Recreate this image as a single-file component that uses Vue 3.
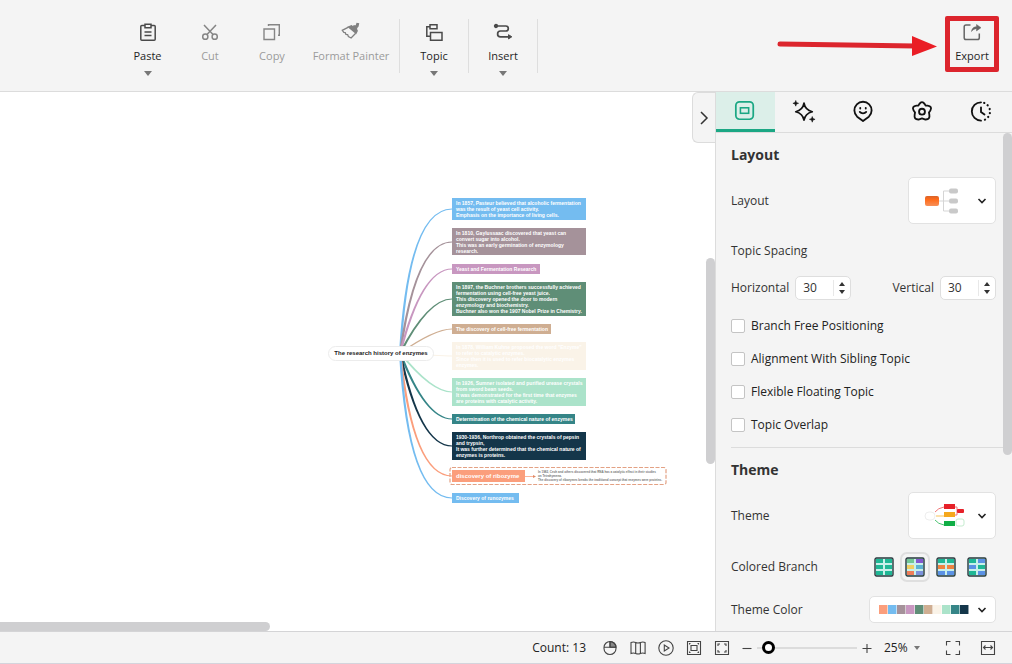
<script setup>
import { ref } from 'vue'

const horizontal = ref(30)
const vertical = ref(30)
const zoom = ref(6)
const scale = ref('25%')
const activeTab = ref(0)
const activeBranch = ref(1)

const options = ref([
  { label: 'Branch Free Positioning', on: false },
  { label: 'Alignment With Sibling Topic', on: false },
  { label: 'Flexible Floating Topic', on: false },
  { label: 'Topic Overlap', on: false },
])

const tabs = ['Style', 'AI', 'Mark', 'Clipart', 'History']

const palette = ['#fb9e7c', '#74bcf0', '#a5929a', '#c897c0', '#5f8e77', '#cfae92', '#faf3e8', '#abe3ca', '#358587', '#14364a']

const g = '#1fb795'
const o = '#ee8340'
const b = '#5b92e5'
const branches = [
  { name: 'Single color', cells: [g, g, g, g, g, g] },
  { name: 'Rainbow', cells: ['#72c795', '#8257cf', '#f0cf62', '#5eb2d3', '#ef7d58', '#7b91dc'] },
  { name: 'Alternating rows', cells: [g, g, o, o, b, b] },
  { name: 'Alternating cells', cells: [g, b, b, g, g, b] },
]

const rootX = 400
const rootY = 261
const topics = [
  { y: 106, w: 134, c: '#74bcf0', lines: ['In 1857, Pasteur believed that alcoholic fermentation', 'was the result of yeast cell activity.', 'Emphasis on the importance of living cells.'] },
  { y: 136, w: 134, c: '#a5929a', lines: ['In 1810, Gaylussaac discovered that yeast can', 'convert sugar into alcohol.', 'This was an early germination of enzymology', 'research.'] },
  { y: 172, w: 88, c: '#c897c0', lines: ['Yeast and Fermentation Research'] },
  { y: 190, w: 134, c: '#5f8e77', lines: ['In 1897, the Buchner brothers successfully achieved', 'fermentation using cell-free yeast juice.', 'This discovery opened the door to modern', 'enzymology and biochemistry.', 'Buchner also won the 1907 Nobel Prize in Chemistry.'] },
  { y: 232, w: 99, c: '#cfae92', lines: ['The discovery of cell-free fermentation'] },
  { y: 250, w: 134, c: '#faf3e8', lines: ['In 1878, William Kuhne proposed the word "Enzyme"', 'to refer to catalytic enzymes.', 'Since then it is used to refer biocatalytic enzymes', 'enzymes.'] },
  { y: 286, w: 134, c: '#abe3ca', lines: ['In 1926, Sumner isolated and purified urease crystals', 'from sword bean seeds.', 'It was demonstrated for the first time that enzymes', 'are proteins with catalytic activity.'] },
  { y: 322, w: 123, c: '#358587', lines: ['Determination of the chemical nature of enzymes'] },
  { y: 340, w: 134, c: '#14364a', lines: ['1930-1936, Northrop obtained the crystals of pepsin', 'and trypsin,', 'It was further determined that the chemical nature of', 'enzymes is proteins.'] },
  { y: 378, w: 73, c: '#fb9e7c', big: true, lines: ['discovery of ribozyme'] },
  { y: 401, w: 67, c: '#74bcf0', lines: ['Discovery of runozymes'] },
]

const heights = [22, 27, 10, 34, 10, 28, 28, 10, 28, 12, 10]

function branchPath(i) {
  const y = topics[i].y + Math.round(heights[i] / 2)
  const cx = 440 - 0.22 * Math.abs(y - rootY)
  const e = y < rootY ? 0.6 : -0.6
  return `M${rootX - 1} ${rootY}Q${cx - 0.8} ${y - e} 452 ${y - e}V${y + e}Q${cx + 0.8} ${y + e} ${rootX + 1.5} ${rootY}Z`
}
</script>

<template>
  <div class="app">
    <header class="toolbar">
      <button class="tool" type="button">
        <svg class="ico" viewBox="0 0 20 20" fill="none" stroke="#4a4a4a" stroke-width="1.5">
          <path d="M6.500 3.500H3.800a1 1 0 0 0-1 1v12.700a1 1 0 0 0 1 1h12.400a1 1 0 0 0 1-1V4.500a1 1 0 0 0-1-1H13.500M7 2.200h6v3.600H7zM6.500 10h7M6.500 13.500h7" />
        </svg>
        <span>Paste</span>
        <i class="caret"></i>
      </button>
      <button class="tool off" type="button">
        <svg class="ico" viewBox="0 0 20 20" fill="none" stroke="#858585" stroke-width="1.5">
          <circle cx="5.300" cy="14.700" r="2.600" /><circle cx="14.700" cy="14.700" r="2.600" />
          <path d="M4 3l9 9.600M16 3l-9 9.600" />
        </svg>
        <span>Cut</span>
      </button>
      <button class="tool off" type="button">
        <svg class="ico" viewBox="0 0 20 20" fill="none" stroke="#858585" stroke-width="1.4">
          <path d="M2 7h10.500v10.500H2zM6.500 4V2.700h10.800v10.600H16" />
        </svg>
        <span>Copy</span>
      </button>
      <button class="tool off wide" type="button">
        <svg class="ico" viewBox="0 0 20 20" fill="none" stroke="#808080" stroke-width="1.300">
          <path d="M7.500 5l7.500 6.200 1.200-2.400-5.700-5z" fill="#808080" />
          <path d="M11 5l2-1.200 2.200.2L16 1.500l1.500.3-.6 2.700-1.400 1.300.2 2.200-1.200 1.500z" fill="#808080" />
          <path d="M7.500 5.200L1.300 8.300l1.500 2 1.400.2.700 1.800 1.700.3.800 2 2.700 1.400 4.600-4.800" />
        </svg>
        <span>Format Painter</span>
      </button>
      <div class="group">
        <button class="tool" type="button">
          <svg class="ico" viewBox="0 0 20 20" fill="none" stroke="#4a4a4a" stroke-width="1.500">
            <path d="M6 2.700h7v4H6zM6.500 10.500H18v7.800H6.500zM6 4.700H2.800v9.500h3.700" />
          </svg>
          <span>Topic</span>
          <i class="caret"></i>
        </button>
      </div>
      <div class="group last">
        <button class="tool" type="button">
          <svg class="ico" viewBox="0 0 20 20" fill="none" stroke="#4a4a4a" stroke-width="1.700">
            <circle cx="3" cy="4" r="1.300" fill="#4a4a4a" />
            <path d="M3 4h9.800a2.500 2.500 0 0 1 0 5H7.500a2.900 2.900 0 0 0 0 5.800H16" />
            <path d="M15.500 12.700l3.300 2.100-3.300 2.100z" fill="#4a4a4a" stroke-width="1" />
          </svg>
          <span>Insert</span>
          <i class="caret"></i>
        </button>
      </div>
      <svg class="arrow" viewBox="0 0 162 24" aria-hidden="true">
        <path d="M3 11L138 13" stroke="#dc252d" stroke-width="5" stroke-linecap="round" />
        <path d="M135 3L160 13.500L135 23z" fill="#ea1d25" />
      </svg>
      <button class="tool export" type="button">
        <svg class="ico" viewBox="0 0 20 20" fill="none" stroke="#666" stroke-width="1.500">
          <path d="M8.500 3H4a1.800 1.800 0 0 0-1.800 1.800v11A1.800 1.800 0 0 0 4 17.600h11.500a1.800 1.800 0 0 0 1.800-1.800V11.500" />
          <path d="M9.500 9.500c.5-3.500 2.500-4.700 5-4.700V2.500L19 5.700l-4.500 3.200V6.700c-2 0-3.500.8-5 2.800z" fill="#666" stroke-width=".5" />
        </svg>
        <span>Export</span>
      </button>
    </header>

    <div class="main">
      <main class="canvas">
        <div class="map">
          <svg class="links" width="693" height="538" viewBox="0 0 693 538">
            <path v-for="(t, i) in topics" :key="i" :d="branchPath(i)" :fill="t.c" />
            <path d="M525 384.500h9" stroke="#fbb59b" /><path d="M533 383l3 1.500-3 1.500z" fill="#e08a66" />
            <rect x="450" y="375.500" width="216" height="17" rx="2" fill="none" stroke="#e3a184" stroke-width="1.200" stroke-dasharray="4 1.500" />
          </svg>
          <div
            v-for="(t, i) in topics"
            :key="i"
            class="topic"
            :class="{ big: t.big }"
            :style="{ top: t.y + 'px', width: t.w + 'px', height: heights[i] + 'px', background: t.c }"
          >
            <span v-for="line in t.lines" :key="line">{{ line }}</span>
          </div>
          <div class="note">
            <span>In 1982, Cech and others discovered that RNA has a catalytic effect in their studies</span>
            <span>on Tetrahymena.</span>
            <span>The discovery of ribozymes breaks the traditional concept that enzymes were proteins.</span>
          </div>
          <div class="root">The research history of enzymes</div>
        </div>
        <div class="thumb-v"></div>
        <div class="thumb-h"></div>
        <button class="collapse" type="button" aria-label="Collapse panel">
          <svg width="10" height="16" viewBox="0 0 10 16" fill="none" stroke="#333" stroke-width="1.500"><path d="M2 2l6 6-6 6" /></svg>
        </button>
      </main>

      <aside class="panel">
        <nav class="tabs">
          <button v-for="(t, i) in tabs" :key="t" type="button" :aria-label="t" :class="{ active: i === activeTab }" @click="activeTab = i">
            <svg v-if="i === 0" viewBox="0 0 24 24" fill="none" stroke="#1ba784" stroke-width="1.900">
              <rect x="2" y="2" width="19" height="19" rx="4" /><rect x="7" y="8.500" width="9" height="6" stroke-width="1.700" />
            </svg>
            <svg v-else-if="i === 1" viewBox="0 0 24 24" fill="none" stroke="#111" stroke-width="1.900" stroke-linejoin="round">
              <path d="M12 3.500c1 5.700 3.500 8 9 9.300-5.500 1.300-8 3.700-9 9.200-1-5.500-3.500-7.900-9-9.200 5.500-1.300 8-3.600 9-9.300z" />
              <path d="M3 .5l.8 2.300 2.300.8-2.300.8L3 6.700l-.8-2.300-2.300-.8 2.300-.8zM21 18l.8 2.300 2.300.8-2.300.8-.8 2.300-.8-2.300-2.300-.8 2.300-.8z" fill="#111" stroke="#111" stroke-width=".6" />
            </svg>
            <svg v-else-if="i === 2" viewBox="0 0 24 24" fill="none" stroke="#111" stroke-width="2" stroke-linejoin="round" stroke-linecap="round">
              <path d="M12 23L5.600 18.200a9.400 9.400 0 1 1 12.800 0z" /><path d="M9 8.500v.8M15 8.500v.8M8.500 13c1.700 2 5.300 2 7 0" />
            </svg>
            <svg v-else-if="i === 3" viewBox="0 0 24 24" fill="none" stroke="#111" stroke-width="2" stroke-linejoin="round">
              <path d="M9 4.500q3-4.500 6 0l.9 1.500 2.200.2q5.500.8 3 5.300l-1.500 2.100.4 2.400q1 5.500-4.200 5.300L12 20l-3.800 1.300q-5.200.2-4.200-5.300l.4-2.400-1.500-2.100Q.4 7 5.900 6.200L8.100 6z" /><circle cx="12" cy="12.700" r="3.200" />
            </svg>
            <svg v-else viewBox="0 0 24 24" fill="none" stroke="#111" stroke-width="2" stroke-linecap="round">
              <path d="M12 2.500a10 10 0 0 0 0 20M12 8v5l3.800 2.800" />
              <path d="M15.500 3.200a10 10 0 0 1 0 18.600" stroke-dasharray=".1 4.400" stroke-width="2.400" />
            </svg>
          </button>
        </nav>

        <div class="body">
          <h2>Layout</h2>
          <div class="row">
            <span id="layout-label">Layout</span>
            <button class="picker" type="button" aria-haspopup="listbox" aria-labelledby="layout-label">
              <svg width="40" height="30" viewBox="0 0 40 30">
                <defs><linearGradient id="og" x1="0" y1="0" x2="0" y2="1"><stop offset="0" stop-color="#d9632a" /><stop offset=".35" stop-color="#ff6b1a" /><stop offset="1" stop-color="#f79059" /></linearGradient></defs>
                <path d="M18 15h10M22.500 5v20M22.500 5H28M22.500 25H28" stroke="#d5d5d5" fill="none" />
                <rect x="4" y="10" width="14" height="10" rx="2" fill="url(#og)" />
                <rect x="28" y="2.500" width="9" height="5" rx="2" fill="#c9c9c9" /><rect x="28" y="12.500" width="9" height="5" rx="2" fill="#c9c9c9" /><rect x="28" y="22.500" width="9" height="5" rx="2" fill="#c9c9c9" />
              </svg>
              <svg class="chev" viewBox="0 0 10 8"><path d="M1.500 2L5 5.500 8.500 2" /></svg>
            </button>
          </div>

          <div class="spacing-title">Topic Spacing</div>
          <div class="row spacing">
            <div class="field">
              <label for="sp-h">Horizontal</label>
              <div class="spin">
                <input id="sp-h" v-model.number="horizontal" type="number" />
                <div class="steps">
                  <button type="button" aria-label="Increase horizontal" @click="horizontal++"><i class="up"></i></button>
                  <button type="button" aria-label="Decrease horizontal" @click="horizontal--"><i class="down"></i></button>
                </div>
              </div>
            </div>
            <div class="field">
              <label for="sp-v">Vertical</label>
              <div class="spin">
                <input id="sp-v" v-model.number="vertical" type="number" />
                <div class="steps">
                  <button type="button" aria-label="Increase vertical" @click="vertical++"><i class="up"></i></button>
                  <button type="button" aria-label="Decrease vertical" @click="vertical--"><i class="down"></i></button>
                </div>
              </div>
            </div>
          </div>

          <div class="checks">
            <label v-for="opt in options" :key="opt.label"><input v-model="opt.on" type="checkbox" />{{ opt.label }}</label>
          </div>

          <hr />

          <h2>Theme</h2>
          <div class="row">
            <span id="theme-label">Theme</span>
            <button class="picker" type="button" aria-haspopup="listbox" aria-labelledby="theme-label">
              <svg width="40" height="30" viewBox="0 0 40 30" fill="none">
                <rect x="4" y="11" width="10" height="8" rx="4" fill="#fff" stroke="#eee" />
                <path d="M14 11q3-4 9-5" stroke="#f0787a" /><path d="M15 15h8" stroke="#f7c35a" /><path d="M14 19q3 4 9 5" stroke="#4fc574" />
                <path d="M34 6h2v8h-2M36 10h2" stroke="#f0787a" />
                <rect x="23" y="3" width="11" height="5" fill="#e62129" /><rect x="23" y="11" width="11" height="5" fill="#f5a81c" /><rect x="23" y="20" width="11" height="5" fill="#0fae45" />
                <rect x="36" y="8" width="7" height="4" rx="1" fill="#e62129" /><rect x="35" y="18" width="8" height="7" rx="2" stroke="#c5eccf" />
              </svg>
              <svg class="chev" viewBox="0 0 10 8"><path d="M1.500 2L5 5.500 8.500 2" /></svg>
            </button>
          </div>

          <div class="row branch-row">
            <span>Colored Branch</span>
            <div class="branches">
              <button v-for="(br, i) in branches" :key="br.name" type="button" :aria-label="br.name" :class="{ active: i === activeBranch }" @click="activeBranch = i">
                <svg width="20" height="20" viewBox="0 0 20 20">
                  <rect x="1" y="1" width="18" height="18" rx="1.500" fill="#c9f0ea" stroke="#26383c" stroke-width="1.400" />
                  <rect v-for="(c, k) in br.cells" :key="k" :x="k % 2 ? 11 : 2" :y="2 + Math.floor(k / 2) * 6" width="7" height="4" :fill="c" />
                </svg>
              </button>
            </div>
          </div>

          <div class="row color-row">
            <span id="color-label">Theme Color</span>
            <button class="picker colors" type="button" aria-haspopup="listbox" aria-labelledby="color-label">
              <span class="swatches"><i v-for="c in palette" :key="c" :style="{ background: c }"></i></span>
              <svg class="chev" viewBox="0 0 10 8"><path d="M1.500 2L5 5.500 8.500 2" /></svg>
            </button>
          </div>
        </div>
        <div class="thumb-p"></div>
      </aside>
    </div>

    <footer class="status">
      <span class="count">Count: 13</span>
      <button type="button" aria-label="Mouse mode">
        <svg viewBox="0 0 16 16"><path d="M8 1.500a6 5.700 0 0 1 6 5.800H8z" fill="#888" /><rect x="2" y="1.500" width="12" height="13" rx="6" /><path d="M2 7.300h12M8 1.500v5.800" /></svg>
      </button>
      <button type="button" aria-label="Overview map">
        <svg viewBox="0 0 16 16"><path d="M1 2.500q2.500-1 4.700 0t4.700 0 4.700 0v11q-2.500-1-4.700 0t-4.700 0-4.700 0zM5.700 2.500v11M10.400 2.500v11" /></svg>
      </button>
      <button type="button" aria-label="Presentation">
        <svg viewBox="0 0 16 16"><circle cx="8" cy="8" r="7.200" /><path d="M6.300 5v6l4.700-3z" /></svg>
      </button>
      <button type="button" aria-label="Fit page">
        <svg viewBox="0 0 16 16"><path d="M1.500 1.500h13v13h-13zM5 5.500h6v5H5zM3.500 4.500v-1h1M11.500 3.500h1v1M12.500 11.500v1h-1M4.500 12.500h-1v-1" /></svg>
      </button>
      <button type="button" aria-label="Fit content">
        <svg viewBox="0 0 16 16"><path d="M1.500 1.500h13v13h-13z" /><path d="M4 6V4h2M10 4h2v2M12 10v2h-2M6 12H4v-2" /></svg>
      </button>
      <div class="zoomer">
        <button class="pm" type="button" aria-label="Zoom out"><svg viewBox="0 0 10 10"><path d="M.5 5.500h9" /></svg></button>
        <input v-model="zoom" type="range" min="0" max="100" aria-label="Zoom level" />
        <button class="pm" type="button" aria-label="Zoom in"><svg viewBox="0 0 10 10"><path d="M.5 5.500h9M5 1v9" /></svg></button>
      </div>
      <div class="scale">
        <select v-model="scale" aria-label="Zoom percentage"><option>25%</option><option>50%</option><option>100%</option></select>
        <i class="caret small"></i>
      </div>
      <button class="full" type="button" aria-label="Full screen">
        <svg viewBox="0 0 16 16"><path d="M1.500 5.500v-4h4M10.500 1.500h4v4M14.500 10.500v4h-4M5.500 14.500h-4v-4" /></svg>
      </button>
      <button class="fitw" type="button" aria-label="Fit width">
        <svg viewBox="0 0 16 16"><path d="M1.500 1.500h13v13h-13zM3.500 7.500h9M5.500 5.500l-2 2 2 2M10.500 5.500l2 2-2 2" /></svg>
      </button>
    </footer>
  </div>
</template>

<style>
html, body { margin: 0; height: 100%; }
</style>

<style scoped>
.app {
  display: flex;
  flex-direction: column;
  height: 100vh;
  overflow: hidden;
  background: #f4f4f4;
  color: #333;
  font: 12px/20px "Open Sans", "Noto Sans", sans-serif;
}
.app *, .app *::before { box-sizing: border-box; }
button { border: 0; padding: 0; margin: 0; background: none; font: inherit; color: inherit; }

.toolbar { display: flex; flex: none; height: 92px; padding: 16px 13px 0 116px; border-bottom: 1px solid #dcdcdc; }
.tool { display: flex; flex-direction: column; align-items: center; width: 62px; height: 64px; padding-top: 6px; color: #1f1f1f; line-height: 16px; font-size: 11px; white-space: nowrap; }
.tool span { margin-top: 6px; }
.tool:first-child { width: 63px; }
.tool.off { color: #9b9b9b; }
.tool.wide { width: 96px; }
.ico { width: 20px; height: 20px; flex: none; }
.caret { width: 0; height: 0; margin-top: 7px; border: 4px solid transparent; border-top: 5px solid #777; border-bottom: 0; }
.group { height: 54px; margin-top: 3px; border-left: 1px solid #dedede; }
.group .tool { width: 68px; margin-top: -3px; }
.group.last { border-right: 1px solid #dedede; }
.arrow { width: 162px; height: 24px; margin: 17px 6px 0 auto; fill: none; }
.tool.export { width: 54px; height: 56px; padding-top: 1px; border: 5px solid #dc252d; border-radius: 2px; }

.main { display: flex; flex: 1; min-height: 0; }
.canvas { position: relative; flex: 1; min-width: 0; background: #fff; overflow: hidden; }
.map { position: absolute; inset: 0; font-family: "Liberation Sans", Arial, sans-serif; }
.links { position: absolute; left: 0; top: 0; }
.topic { position: absolute; left: 452px; display: flex; flex-direction: column; justify-content: center; padding-left: 4px; color: #fff; font-size: 5px; line-height: 6px; font-weight: 700; white-space: nowrap; }
.topic.big { font-size: 6px; }
.note { position: absolute; left: 538px; top: 378px; display: flex; flex-direction: column; color: #777; font-size: 3px; line-height: 4px; font-weight: 700; white-space: nowrap; }
.root { position: absolute; left: 328px; top: 254px; width: 106px; height: 15px; border: 1px solid #ececec; border-radius: 8px; background: #fff; color: #222; font-size: 6px; line-height: 13px; font-weight: 700; text-align: center; white-space: nowrap; }
.thumb-v { position: absolute; right: 0; top: 166px; width: 9px; height: 206px; border-radius: 5px; background: #cfcfd1; }
.thumb-h { position: absolute; left: -5px; bottom: 0; width: 275px; height: 9px; border-radius: 5px; background: #cfcfd1; }
.collapse { position: absolute; right: 0; top: 0; display: flex; align-items: center; justify-content: center; width: 23px; height: 51px; border: 1px solid #dcdcdc; border-right: 0; border-radius: 6px 0 0 6px; background: #f4f4f4; }

.panel { position: relative; flex: none; width: 297px; border-left: 1px solid #dcdcdc; overflow: hidden; }
.tabs { display: flex; height: 41px; padding-right: 2px; border-bottom: 1px solid #dcdcdc; }
.tabs button { display: flex; flex: 1; align-items: center; justify-content: center; height: 40px; border-bottom: 3px solid transparent; }
.tabs button.active { background: #dcefe9; border-bottom-color: #1ba784; }
.tabs svg { width: 22px; height: 22px; overflow: visible; }
.body { padding: 12px 16px 0 15px; }
h2 { margin: 0 0 12px; font-size: 14px; line-height: 20px; font-weight: 700; }
.row { display: flex; align-items: center; justify-content: space-between; }
.picker { display: flex; align-items: center; justify-content: space-between; width: 88px; height: 47px; padding: 0 8px 0 12px; border: 1px solid #e2e2e2; border-radius: 5px; background: #fff; }
.picker svg { overflow: visible; }
.chev { width: 10px; height: 8px; fill: none; stroke: #222; stroke-width: 1.6; }
.spacing-title { margin-top: 17px; }
.spacing { margin-top: 15px; }
.field { display: flex; align-items: center; gap: 6px; }
.spin { display: flex; align-items: center; width: 56px; height: 24px; border: 1px solid #dedede; border-radius: 5px; background: #fff; }
.spin input { flex: 1; width: 0; min-width: 0; height: 20px; padding: 0 0 0 7px; border: 0; outline: 0; background: none; color: #333; font: inherit; appearance: textfield; }
.spin input::-webkit-inner-spin-button { display: none; }
.steps { display: flex; flex-direction: column; width: 17px; height: 16px; border-left: 1px solid #e8e8e8; }
.steps button { display: flex; flex: 1; align-items: center; justify-content: center; }
.up, .down { border: 3px solid transparent; }
.up { border-top: 0; border-bottom: 4px solid #333; }
.down { border-bottom: 0; border-top: 4px solid #333; }
.checks { display: flex; flex-direction: column; gap: 13px; margin-top: 16px; color: #222; }
.checks label { display: flex; align-items: center; gap: 6px; }
.checks input { appearance: none; width: 14px; height: 14px; margin: 0; border: 1px solid #c4c4c4; border-radius: 2px; background: #fff; }
.checks input:checked { background: #1ba784; }
hr { height: 1px; margin: 12px -8px 12px 0; border: 0; background: #dcdcdc; }
.branch-row { margin-top: 13px; }
.branches { display: flex; gap: 1px; margin-right: 4px; }
.branches button { display: flex; align-items: center; justify-content: center; width: 30px; height: 30px; border: 2px solid transparent; border-radius: 7px; }
.branches button.active { border-color: #dfdfdf; }
.color-row { margin-top: 14px; }
.picker.colors { width: 127px; height: 27px; padding-left: 9px; }
.swatches { display: flex; }
.swatches i { width: 9px; height: 9px; margin-right: 0; box-shadow: inset -1px 0 #fff8; }
.thumb-p { position: absolute; right: 0; top: 41px; width: 9px; height: 322px; border-radius: 5px; background: #cfcfd1; }

.status { display: flex; flex: none; align-items: center; justify-content: flex-end; height: 33px; padding-right: 16px; border-top: 1px solid #d4d4d6; border-bottom: 1px solid #d4d4dc; color: #222; }
.status > button { display: flex; width: 16px; height: 16px; margin-right: 12px; }
.status svg { width: 16px; height: 16px; fill: none; stroke: #444; stroke-width: 1.1; }
.count { margin-right: 16px; }
.zoomer { display: flex; align-items: center; gap: 5px; margin-right: 12px; }
.zoomer .pm { display: flex; width: 10px; height: 10px; }
.zoomer .pm svg { width: 10px; height: 10px; }
.zoomer input { appearance: none; width: 100px; height: 14px; margin: 0; background: linear-gradient(#dcdcdc, #dcdcdc) center / 100% 2px no-repeat; }
.zoomer input::-webkit-slider-thumb { appearance: none; width: 13px; height: 13px; border: 3px solid #000; border-radius: 50%; background: #fff; }
.scale { display: flex; align-items: center; gap: 6px; margin-right: 25px; }
.scale select { appearance: none; padding: 0; border: 0; background: none; color: inherit; font: inherit; width: 24px; }
.caret.small { margin-top: 0; border-width: 3px; border-top-width: 4px; border-bottom-width: 0; }
.status > .full { margin-right: 19px; }
.status > .fitw { margin-right: 0; }
</style>
